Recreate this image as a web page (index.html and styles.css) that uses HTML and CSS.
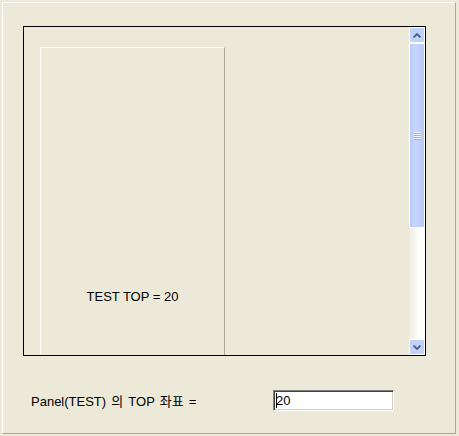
FILE: index.html
```html
<!DOCTYPE html>
<html lang="ko">
<head>
    <meta charset="UTF-8">
    <title>Panel TOP</title>
    <link rel="stylesheet" href="styles.css">
</head>
<body>

<div class="window">
    <!-- Scroll box with the TEST panel -->
    <div class="scroll-box">
        <div class="viewport">
            <div class="panel">
                <p class="panel-text">TEST TOP = 20</p>
            </div>
        </div>
        <div class="scrollbar">
            <div class="sb-btn">
                <svg width="8" height="5" viewBox="0 0 8 5"><path d="M0.5 4.5 L4 1 L7.5 4.5" fill="none" stroke="#4d6185" stroke-width="1.8"/></svg>
            </div>
            <div class="sb-thumb">
                <div class="grip"><span></span><span></span><span></span><span></span></div>
            </div>
            <div class="sb-track"></div>
            <div class="sb-btn">
                <svg width="8" height="5" viewBox="0 0 8 5"><path d="M0.5 0.5 L4 4 L7.5 0.5" fill="none" stroke="#4d6185" stroke-width="1.8"/></svg>
            </div>
        </div>
    </div>

    <!-- Bottom row -->
    <div class="field-row">
        <label class="field-label">Panel(TEST) 의 TOP 좌표 =</label>
        <div class="text-box"><span class="caret"></span>20</div>
    </div>
</div>

</body>
</html>
```

FILE: styles.css
```css
* {
    margin: 0;
    padding: 0;
    box-sizing: border-box;
}
body {
    background-color: #ece9d8;
    font-family: "Liberation Sans", "Noto Sans CJK KR", sans-serif;
    font-size: 13px;
    color: #000;
}
.window {
    width: 454px;
    height: 432px;
    margin: 2px 0 0 2px;
    border: 1px solid;
    border-color: #fff #aca899 #aca899 #fff;
    padding: 23px 0 0 20px;
}
.scroll-box {
    width: 403px;
    height: 330px;
    border: 1px solid #000;
    display: flex;
}
.viewport {
    flex: 1;
    overflow: hidden;
    padding: 20px 0 0 16px;
}
.panel {
    width: 185px;
    height: 420px;
    border-top: 1px solid #fff;
    border-left: 1px solid #fff;
    border-right: 1px solid #aca899;
    padding-top: 241px;
}
.panel-text {
    text-align: center;
    line-height: 15px;
}
.scrollbar {
    width: 16px;
    display: flex;
    flex-direction: column;
}
.sb-btn {
    height: 16px;
    border: 1px solid #fff;
    border-radius: 2px;
    background-color: #c1d2f8;
    display: flex;
    align-items: center;
    justify-content: center;
}
.sb-thumb {
    height: 185px;
    border: 1px solid #fff;
    border-radius: 2px;
    background: linear-gradient(to right, #b9cbf7, #c6d6fd 40%, #b8c9f5);
    display: flex;
    align-items: center;
    justify-content: center;
}
.grip {
    display: flex;
    flex-direction: column;
    gap: 1px;
}
.grip span {
    display: block;
    width: 7px;
    height: 1px;
    background-color: #eef3fe;
    box-shadow: 0 1px 0 #9cb2e6;
}
.sb-track {
    flex: 1;
    background: linear-gradient(to right, #eeede5, #fdfdfb 60%, #fff);
}
.field-row {
    display: flex;
    align-items: center;
    margin-top: 34px;
    padding-left: 8px;
}
.field-label {
    width: 242px;
    word-spacing: 1.5px;
}
.text-box {
    width: 121px;
    height: 21px;
    border: 1px solid;
    border-color: #808080 #fff #fff #808080;
    box-shadow: inset 1px 1px 0 #404040, inset -1px -1px 0 #d4d0c8;
    background-color: #fff;
    padding-left: 2px;
    display: flex;
    align-items: center;
    line-height: 15px;
}
.caret {
    display: inline-block;
    width: 1px;
    height: 15px;
    background-color: #000;
    margin-right: -1px;
}
```
